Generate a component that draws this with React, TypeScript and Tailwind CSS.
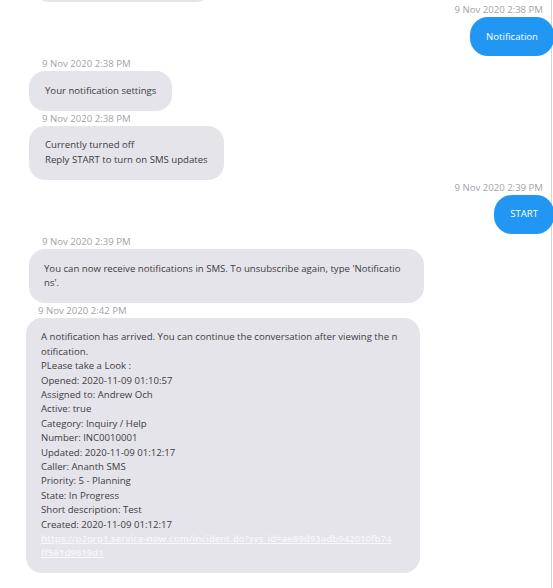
import React from 'react';

type Message = {
  from: 'bot' | 'user';
  time: string;
  lines: string[];
  link?: string[];
  offset?: string; // left margin of the bubble
  stampOffset?: string; // left margin of the timestamp
};

const messages: Message[] = [
  { from: 'user', time: '9 Nov 2020 2:38 PM', lines: ['Notification'] },
  { from: 'bot', time: '9 Nov 2020 2:38 PM', lines: ['Your notification settings'] },
  {
    from: 'bot',
    time: '9 Nov 2020 2:38 PM',
    lines: ['Currently turned off', 'Reply START to turn on SMS updates'],
  },
  { from: 'user', time: '9 Nov 2020 2:39 PM', lines: ['START'] },
  {
    from: 'bot',
    time: '9 Nov 2020 2:39 PM',
    lines: [
      "You can now receive notifications in SMS. To unsubscribe again, type 'Notificatio",
      "ns'.",
    ],
    offset: 'ml-[29px] w-[395px] pl-[15px]',
  },
  {
    from: 'bot',
    time: '9 Nov 2020 2:42 PM',
    lines: [
      'A notification has arrived. You can continue the conversation after viewing the n',
      'otification.',
      'PLease take a Look :',
      'Opened: 2020-11-09 01:10:57',
      'Assigned to: Andrew Och',
      'Active: true',
      'Category: Inquiry / Help',
      'Number: INC0010001',
      'Updated: 2020-11-09 01:12:17',
      'Caller: Ananth SMS',
      'Priority: 5 - Planning',
      'State: In Progress',
      'Short description: Test',
      'Created: 2020-11-09 01:12:17',
    ],
    link: ['https://p2qrp1.service-now.com/incident.do?sys_id=ae89d93adb942010fb74', 'ff561d9619d1'],
    offset: 'ml-[26px] w-[394px] pl-[15px]',
    stampOffset: 'ml-[38px]',
  },
];

const Stamp = ({ msg }: { msg: Message }) => (
  <div
    className={`h-[15px] text-[9.6px] leading-[15px] text-[#a2a2a6] whitespace-nowrap ${
      msg.from === 'user' ? 'self-end mr-[8px]' : msg.stampOffset ?? 'ml-[42px]'
    }`}
  >
    {msg.time}
  </div>
);

const Bubble = ({ msg }: { msg: Message }) => {
  if (msg.from === 'user') {
    return (
      <div className="self-end -mr-[3px] rounded-[18px] bg-[#2196f3] px-4 py-[12.5px] text-[9.6px] leading-[14.4px] text-white">
        {msg.lines[0]}
      </div>
    );
  }
  return (
    <div
      className={`self-start rounded-[16px] bg-[#e5e4ea] py-[12.5px] text-[9.6px] leading-[14.4px] text-[#3d3d42] ${
        msg.offset ?? 'ml-[29px] px-4'
      }`}
    >
      {msg.lines.map((line, i) => (
        <div key={i} className="whitespace-nowrap">
          {line}
        </div>
      ))}
      {msg.link && (
        <a className="block font-semibold text-[#f7f7fa] underline">
          {msg.link.map((part, i) => (
            <span key={i} className="block whitespace-nowrap">
              {part}
            </span>
          ))}
        </a>
      )}
    </div>
  );
};

export default function App() {
  return (
    <div
      className="h-[588px] w-[553px] overflow-hidden bg-white"
      style={{ fontFamily: '"Open Sans", "Noto Sans", sans-serif' }}
    >
      <div className="flex h-full w-[552px] flex-col border-r border-[#d4d4d8]">
        {/* earlier message, scrolled mostly out of view */}
        <div className="-mt-[36.5px] ml-[33px] h-[38.5px] w-[179px] shrink-0 rounded-[16px] bg-[#e5e4ea]" />
        {messages.map((msg, i) => (
          <React.Fragment key={i}>
            <Stamp msg={msg} />
            <Bubble msg={msg} />
          </React.Fragment>
        ))}
      </div>
    </div>
  );
}
